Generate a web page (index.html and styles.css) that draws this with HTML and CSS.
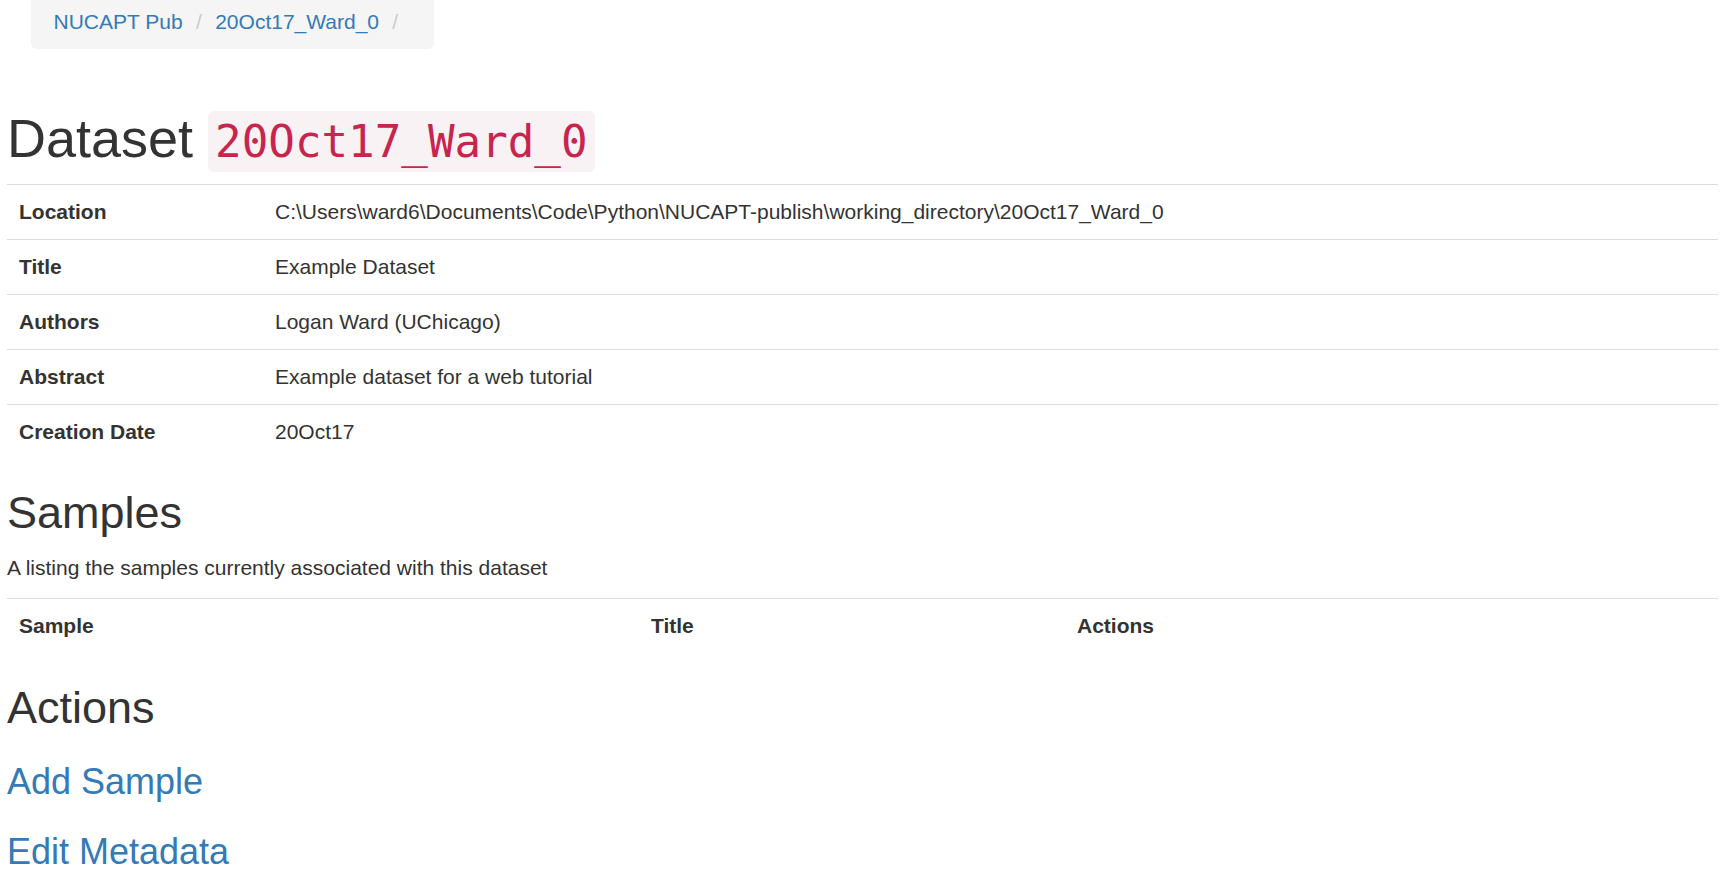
FILE: index.html
```html
<!DOCTYPE html>
<html lang="en">
<head>
<meta charset="utf-8">
<title>Dataset 20Oct17_Ward_0</title>
<link rel="stylesheet" href="styles.css">
</head>
<body>
<div class="page">
  <nav class="crumbs">
    <ol class="breadcrumb">
      <li><a href="#">NUCAPT Pub</a></li>
      <li><a href="#">20Oct17_Ward_0</a></li>
      <li class="active"></li>
    </ol>
  </nav>

  <h1 class="title">Dataset <code>20Oct17_Ward_0</code></h1>

  <table class="table meta">
    <tbody>
      <tr><th class="label-col">Location</th><td>C:\Users\ward6\Documents\Code\Python\NUCAPT-publish\working_directory\20Oct17_Ward_0</td></tr>
      <tr><th class="label-col">Title</th><td>Example Dataset</td></tr>
      <tr><th class="label-col">Authors</th><td>Logan Ward (UChicago)</td></tr>
      <tr><th class="label-col">Abstract</th><td>Example dataset for a web tutorial</td></tr>
      <tr><th class="label-col">Creation Date</th><td>20Oct17</td></tr>
    </tbody>
  </table>

  <h2 class="samples-title">Samples</h2>
  <p class="lead-text">A listing the samples currently associated with this dataset</p>
  <table class="table samples">
    <tbody>
      <tr><th class="col-sample">Sample</th><th class="col-title">Title</th><th>Actions</th></tr>
    </tbody>
  </table>

  <h2>Actions</h2>
  <h3><a href="#">Add Sample</a></h3>
  <h3><a href="#">Edit Metadata</a></h3>
</div>
</body>
</html>
```

FILE: styles.css
```css
* {
  box-sizing: border-box;
}

html, body {
  margin: 0;
  padding: 0;
  background: #fff;
}

body {
  font-family: "Liberation Sans", Arial, Helvetica, sans-serif;
  font-size: 21px;
  line-height: 30px;
  color: #333;
}

a {
  color: #337ab7;
  text-decoration: none;
}

.page {
  padding: 0 7px;
}

/* breadcrumb */
.crumbs {
  display: flex;
}

.breadcrumb {
  margin: -5px 0 30px 24px;
  padding: 12px 22.5px;
  list-style: none;
  background: #f5f5f5;
  border-radius: 6px;
}

.breadcrumb li {
  display: inline-block;
}

.breadcrumb li + li::before {
  content: "/\00a0";
  padding: 0 7.5px;
  color: #ccc;
}

/* headings */
h1, h2, h3 {
  font-family: inherit;
  font-weight: 400;
  line-height: 1.1;
  color: #333;
}

h1 {
  font-size: 54px;
  margin: 30px 0 16px;
}

h2 {
  font-size: 45px;
  margin: 30px 0 15px;
}

h2.samples-title {
  margin-top: 29px;
}

h3 {
  font-size: 36px;
  margin: 30px 0 15px;
}

code {
  font-family: "DejaVu Sans Mono", "Liberation Mono", monospace;
  font-size: 44.2px;
  padding: 5px 7px;
  color: #c7254e;
  background: #f9f2f4;
  border-radius: 6px;
}

p {
  margin: 0 0 15px;
}

/* tables */
.table {
  width: 100%;
  border-collapse: collapse;
  border-spacing: 0;
  margin-bottom: 30px;
}

.meta {
  margin-bottom: 29px;
}

.table th,
.table td {
  padding: 12px;
  line-height: 30px;
  vertical-align: top;
  text-align: left;
  border-top: 1px solid #ddd;
}

.table th {
  font-weight: 700;
}

.meta .label-col {
  width: 256px;
}

.samples .col-sample {
  width: 632px;
}

.samples .col-title {
  width: 426px;
}
```
